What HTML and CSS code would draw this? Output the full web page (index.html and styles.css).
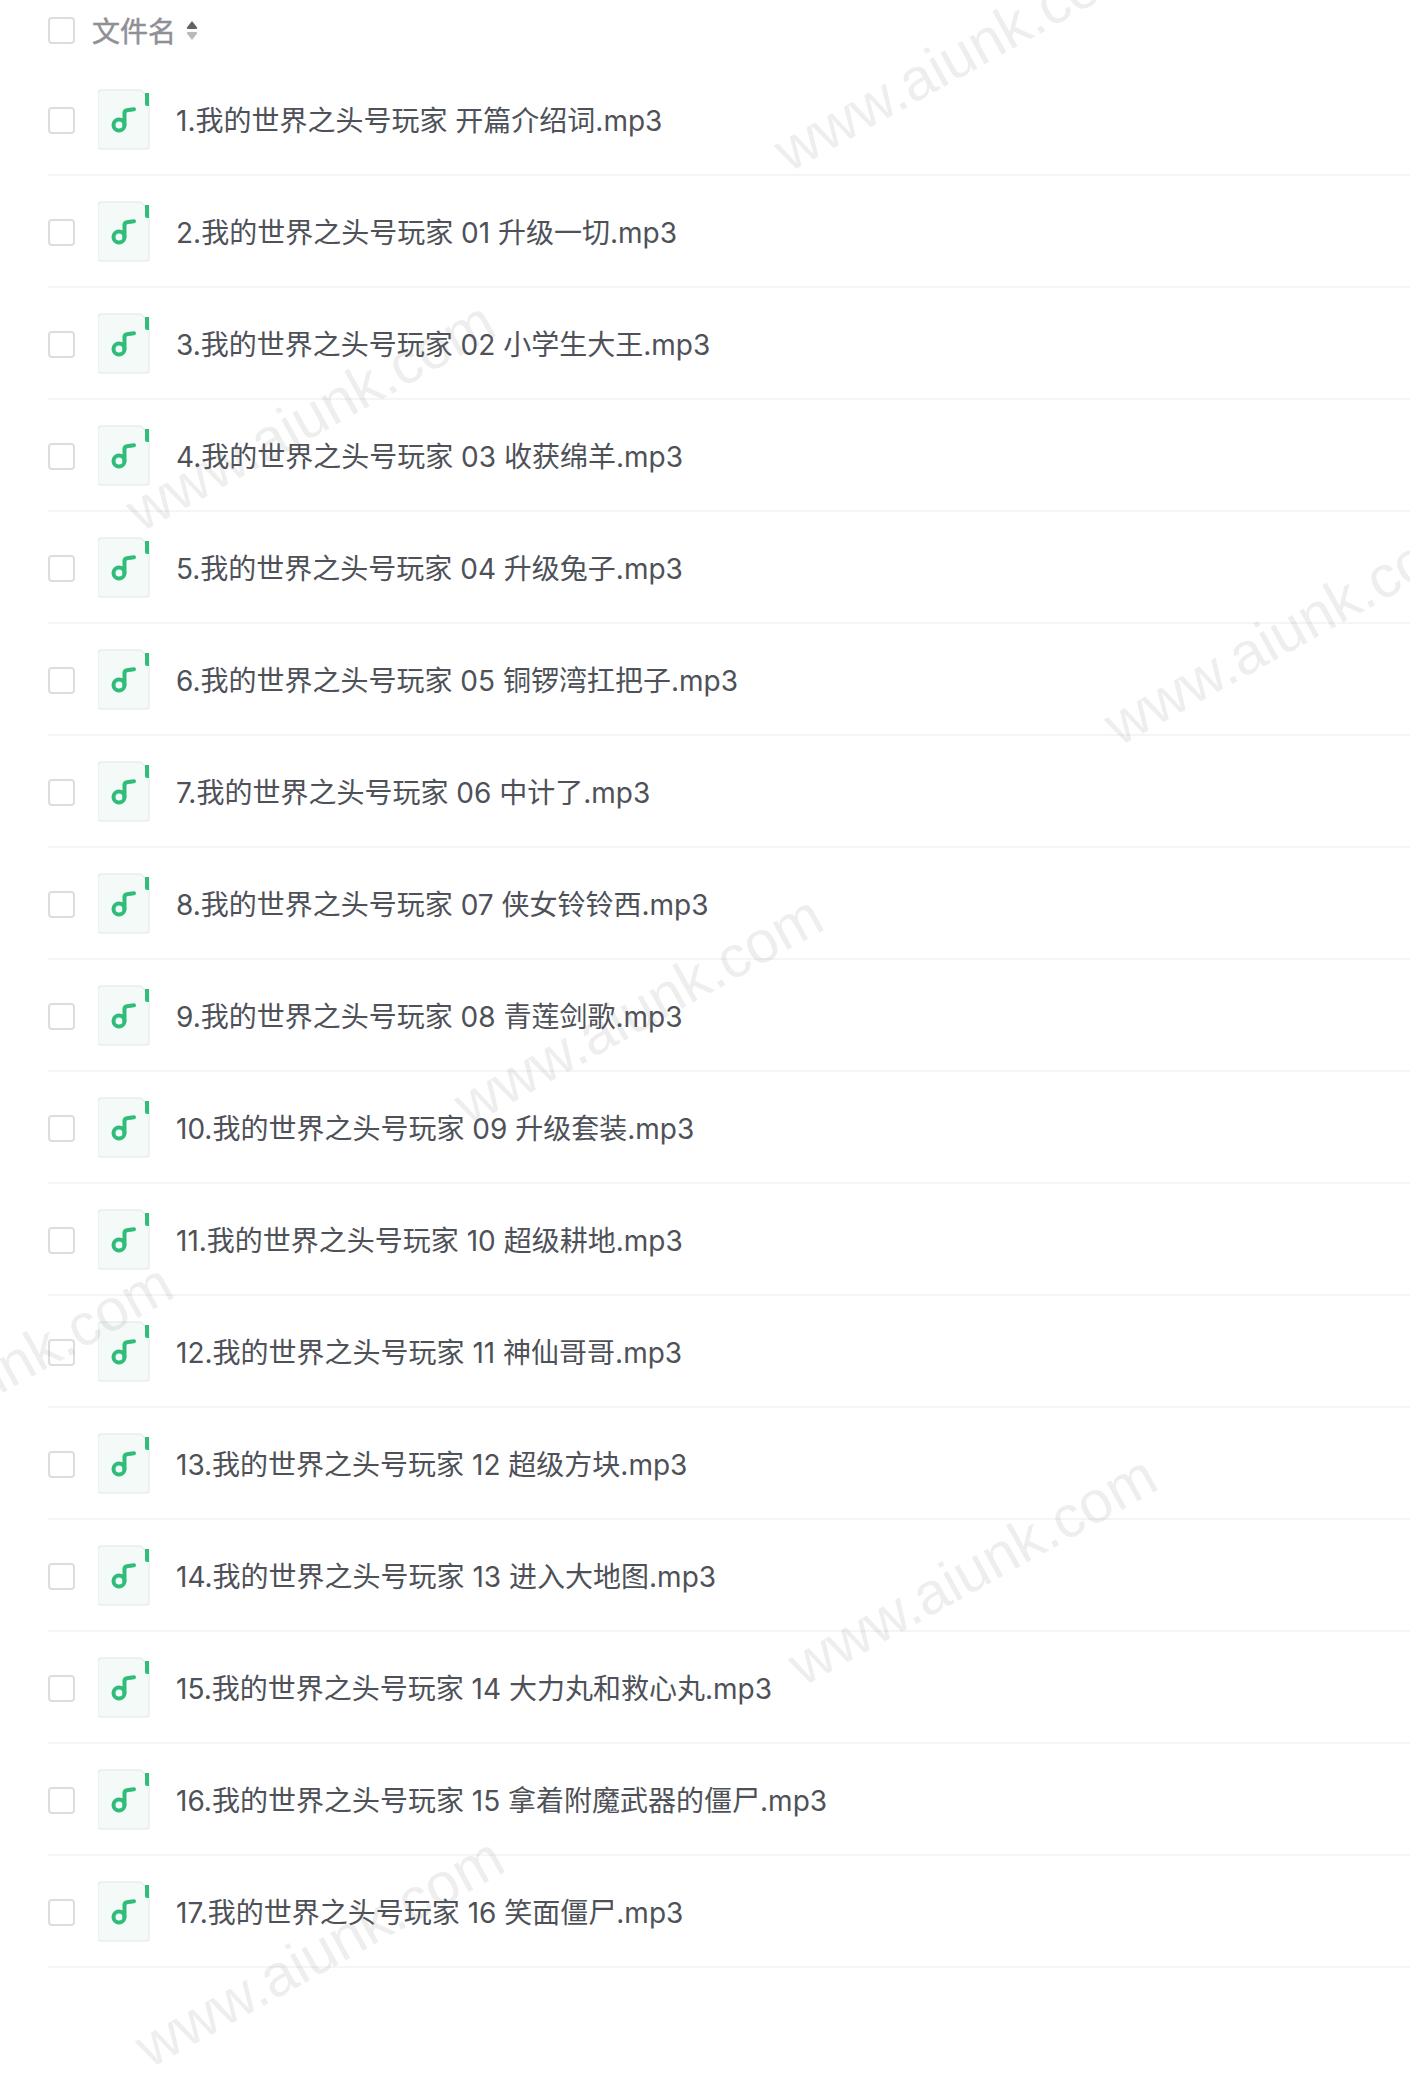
FILE: index.html
```html
<!DOCTYPE html>
<html lang="zh">
<head>
<meta charset="utf-8">
<title>文件列表</title>
<link rel="stylesheet" href="styles.css">
</head>
<body>
<svg class="sprite" width="0" height="0" aria-hidden="true">
  <symbol id="music" viewBox="0 0 52 62">
    <path d="M3 1H43L51 9V57a3 3 0 0 1-3 3H3a3 3 0 0 1-3-3V4a3 3 0 0 1 3-3z" fill="#f3faf7" stroke="#e6efeb" stroke-width="1.5"/>
    <path d="M47 4h4v13h-2a2 2 0 0 1-2-2z" fill="#2fbd79"/>
    <circle cx="21" cy="36" r="5.500" fill="none" stroke="#2fbd79" stroke-width="4"/>
    <path d="M26.500 36V24q0-2.500 2.500-2.800L36 20.300" fill="none" stroke="#2fbd79" stroke-width="4" stroke-linecap="round" stroke-linejoin="round"/>
  </symbol>
</svg>
<main class="list">
  <div class="head"><span class="check"></span><span class="head-label">文件名</span>
    <svg class="sort" viewBox="0 0 12 21" aria-hidden="true">
      <path d="M6 1L11 7.500Q11.500 9 10 9H2Q.5 9 1 7.500z" fill="#606266"/>
      <path d="M6 20L11 13.500Q11.500 12 10 12H2Q.5 12 1 13.500z" fill="#b9babd"/>
    </svg>
  </div>
  <div class="row"><span class="check"></span><svg class="file"><use href="#music"/></svg><span class="name">1.我的世界之头号玩家 开篇介绍词.mp3</span></div>
  <div class="row"><span class="check"></span><svg class="file"><use href="#music"/></svg><span class="name">2.我的世界之头号玩家 01 升级一切.mp3</span></div>
  <div class="row"><span class="check"></span><svg class="file"><use href="#music"/></svg><span class="name">3.我的世界之头号玩家 02 小学生大王.mp3</span></div>
  <div class="row"><span class="check"></span><svg class="file"><use href="#music"/></svg><span class="name">4.我的世界之头号玩家 03 收获绵羊.mp3</span></div>
  <div class="row"><span class="check"></span><svg class="file"><use href="#music"/></svg><span class="name">5.我的世界之头号玩家 04 升级兔子.mp3</span></div>
  <div class="row"><span class="check"></span><svg class="file"><use href="#music"/></svg><span class="name">6.我的世界之头号玩家 05 铜锣湾扛把子.mp3</span></div>
  <div class="row"><span class="check"></span><svg class="file"><use href="#music"/></svg><span class="name">7.我的世界之头号玩家 06 中计了.mp3</span></div>
  <div class="row"><span class="check"></span><svg class="file"><use href="#music"/></svg><span class="name">8.我的世界之头号玩家 07 侠女铃铃西.mp3</span></div>
  <div class="row"><span class="check"></span><svg class="file"><use href="#music"/></svg><span class="name">9.我的世界之头号玩家 08 青莲剑歌.mp3</span></div>
  <div class="row"><span class="check"></span><svg class="file"><use href="#music"/></svg><span class="name">10.我的世界之头号玩家 09 升级套装.mp3</span></div>
  <div class="row"><span class="check"></span><svg class="file"><use href="#music"/></svg><span class="name">11.我的世界之头号玩家 10 超级耕地.mp3</span></div>
  <div class="row"><span class="check"></span><svg class="file"><use href="#music"/></svg><span class="name">12.我的世界之头号玩家 11 神仙哥哥.mp3</span></div>
  <div class="row"><span class="check"></span><svg class="file"><use href="#music"/></svg><span class="name">13.我的世界之头号玩家 12 超级方块.mp3</span></div>
  <div class="row"><span class="check"></span><svg class="file"><use href="#music"/></svg><span class="name">14.我的世界之头号玩家 13 进入大地图.mp3</span></div>
  <div class="row"><span class="check"></span><svg class="file"><use href="#music"/></svg><span class="name">15.我的世界之头号玩家 14 大力丸和救心丸.mp3</span></div>
  <div class="row"><span class="check"></span><svg class="file"><use href="#music"/></svg><span class="name">16.我的世界之头号玩家 15 拿着附魔武器的僵尸.mp3</span></div>
  <div class="row"><span class="check"></span><svg class="file"><use href="#music"/></svg><span class="name">17.我的世界之头号玩家 16 笑面僵尸.mp3</span></div>
</main>
<div class="mark m1">www.aiunk.com</div>
<div class="mark m2">www.aiunk.com</div>
<div class="mark m3">www.aiunk.com</div>
<div class="mark m4">www.aiunk.com</div>
<div class="mark m5">www.aiunk.com</div>
<div class="mark m6">www.aiunk.com</div>
<div class="mark m7">www.aiunk.com</div>
</body>
</html>
```
FILE: styles.css
```css
html, body {
  margin: 0;
  padding: 0;
  background: #fff;
}
body {
  position: relative;
  width: 1410px;
  height: 2082px;
  overflow: hidden;
  font-family: Inter, "Noto Sans CJK SC", sans-serif;
  color: #4e5158;
}
.sprite {
  position: absolute;
}
.list {
  margin-left: 48px;
}
.check {
  flex: none;
  box-sizing: border-box;
  width: 27px;
  height: 27px;
  border: 2px solid #dcdde0;
  border-radius: 4px;
  background: #fff;
}
.head {
  display: flex;
  align-items: center;
  height: 60px;
  padding-bottom: 4px;
}
.head-label {
  margin-left: 17px;
  font-size: 28px;
  color: #8f9095;
  -webkit-text-stroke: 0.5px #8f9095;
}
.sort {
  width: 12px;
  height: 21px;
  margin-left: 10px;
}
.row {
  display: flex;
  align-items: center;
  height: 110px;
  border-bottom: 2px solid #f5f5f6;
}
.row .check {
  margin-top: 2px;
}
.file {
  flex: none;
  width: 52px;
  height: 62px;
  margin: 2px 0 0 23px;
}
.name {
  margin-left: 26px;
  font-size: 28px;
  white-space: pre;
}
.mark {
  position: absolute;
  font-family: "Liberation Sans", sans-serif;
  font-size: 59px;
  line-height: 70px;
  white-space: nowrap;
  color: rgba(120, 120, 120, 0.13);
  transform: rotate(-29deg);
  transform-origin: left bottom;
}
.m1 { left: 796px; top: 116px; }
.m2 { left: 148px; top: 476px; }
.m3 { left: 1126px; top: 690px; }
.m4 { left: 476px; top: 1070px; }
.m5 { left: -174px; top: 1438px; }
.m6 { left: 810px; top: 1630px; }
.m7 { left: 157px; top: 2012px; }
```
